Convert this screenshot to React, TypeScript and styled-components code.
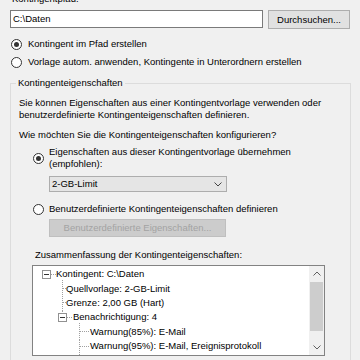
import React from 'react';
import styled, { createGlobalStyle } from 'styled-components';

const GlobalStyle = createGlobalStyle`
  html, body {
    margin: 0;
    padding: 0;
    background: #f0f0f0;
  }
  body {
    font-family: "Liberation Sans", Arial, sans-serif;
    font-size: 9.5px;
    line-height: 12px;
    color: #000;
  }
`;

// --- dialog frame ---
const Dialog = styled.div`
  width: 360px;
  height: 360px;
  overflow: hidden;
  box-sizing: border-box;
  padding-left: 10px;
  background: #f0f0f0;
`;

const PathLabel = styled.div`
  margin-top: -7px;
  padding-left: 2px;
  height: 12px;
`;

const PathRow = styled.div`
  display: flex;
  align-items: flex-start;
  gap: 5px;
  margin-top: 5px;
  height: 19px;
`;

const TextBox = styled.div`
  box-sizing: border-box;
  width: 253px;
  height: 18px;
  border: 1px solid #7a7a7a;
  background: #fff;
  padding: 2px 0 0 2px;
`;

const PushButton = styled.div<{ $width: number; $disabled?: boolean }>`
  box-sizing: border-box;
  display: flex;
  align-items: center;
  justify-content: center;
  width: ${p => p.$width}px;
  height: ${p => (p.$disabled ? 18 : 19)}px;
  background: ${p => (p.$disabled ? '#cccccc' : '#e1e1e1')};
  border: 1px solid ${p => (p.$disabled ? '#bfbfbf' : '#adadad')};
  color: ${p => (p.$disabled ? '#a3a3a3' : '#000')};
`;

// --- radio buttons ---
const RadioRow = styled.div<{ $top: number; $indent: number; $gap: number }>`
  display: flex;
  align-items: center;
  gap: ${p => p.$gap}px;
  margin: ${p => p.$top}px 0 0 ${p => p.$indent}px;
`;

const RadioCircle = styled.span<{ $checked?: boolean }>`
  box-sizing: border-box;
  flex: none;
  width: 11px;
  height: 11px;
  border-radius: 50%;
  border: 1px solid #333;
  background: #fff;
  display: flex;
  align-items: center;
  justify-content: center;

  &::after {
    content: '';
    width: 5px;
    height: 5px;
    border-radius: 50%;
    background: ${p => (p.$checked ? '#333' : 'transparent')};
  }
`;

// --- group box ---
const GroupBox = styled.fieldset`
  box-sizing: border-box;
  width: 341px;
  height: 320px;
  min-width: 0;
  margin: 9px 0 0;
  padding: 0;
  border: 1px solid #dcdcdc;
`;

const GroupCaption = styled.legend`
  margin-left: 5px;
  padding: 0 2px;
  line-height: 12px;
`;

const GroupBody = styled.div`
  padding-left: 8px;
`;

const Text = styled.p<{ $top: number; $indent?: number }>`
  margin: ${p => p.$top}px 0 0 ${p => p.$indent ?? 0}px;
`;

const ComboBox = styled.div`
  box-sizing: border-box;
  width: 178px;
  height: 16px;
  margin: 6px 0 0 30px;
  border: 1px solid #adadad;
  background: #e5e5e5;
  display: flex;
  align-items: center;
  justify-content: space-between;
  padding: 0 4px 0 2px;
`;

const ButtonSlot = styled.div`
  margin: 4px 0 0 30px;
`;

// --- summary tree ---
const TreeBox = styled.div`
  box-sizing: border-box;
  width: 293px;
  height: 91px;
  margin: 4px 0 0 13px;
  border: 1px solid #828282;
  background: #fff;
  display: flex;
  overflow: hidden;
`;

const TreeList = styled.div`
  flex: 1;
  padding-top: 1px;
`;

const TreeRow = styled.div`
  display: flex;
  align-items: center;
  height: 14.4px;
  white-space: nowrap;
`;

const Guide = styled.svg`
  flex: none;
  display: block;
  overflow: visible;
`;

const ScrollBar = styled.div`
  width: 15px;
  display: flex;
  flex-direction: column;
  background: #f0f0f0;
`;

const ScrollArrow = styled.div`
  height: 15px;
  display: flex;
  align-items: center;
  justify-content: center;
`;

const ScrollTrack = styled.div`
  flex: 1;
  padding: 1px 1px 0;
`;

const ScrollThumb = styled.div`
  height: 49px;
  background: #cdcdcd;
`;

const Chevron = ({ up, color = '#606060' }: { up?: boolean; color?: string }) => (
  <svg width="8" height="5" viewBox="0 0 8 5">
    <path
      d={up ? 'M0.5 4.5 L4 1 L7.5 4.5' : 'M0.5 0.5 L4 4 L7.5 0.5'}
      fill="none"
      stroke={color}
      strokeWidth="1"
    />
  </svg>
);

type Line = [number, number, number, number];
type Node = { label: string; width: number; lines: Line[]; box?: number };

const M = 7; // middle of a row
const nodes: Node[] = [
  { label: 'Kontingent: C:\\Daten', width: 23, box: 13, lines: [[17, M, 22, M], [29, M + 5, 29, 15]] },
  { label: 'Quellvorlage: 2-GB-Limit', width: 33, lines: [[29, 0, 29, 15], [29, M, 32, M]] },
  { label: 'Grenze: 2,00 GB (Hart)', width: 33, lines: [[29, 0, 29, 15], [29, M, 32, M]] },
  { label: 'Benachrichtigung: 4', width: 40, box: 29, lines: [[29, 0, 29, M - 4], [33, M, 39, M], [46, M + 5, 46, 15]] },
  { label: 'Warnung(85%): E-Mail', width: 57, lines: [[46, 0, 46, 15], [46, M, 55, M]] },
  { label: 'Warnung(95%): E-Mail, Ereignisprotokoll', width: 57, lines: [[46, 0, 46, 15], [46, M, 55, M]] },
];

const TreeNode = ({ node }: { node: Node }) => (
  <TreeRow>
    <Guide width={node.width} height={15} shapeRendering="crispEdges">
      {node.lines.map(([x1, y1, x2, y2], i) => (
        <line
          key={i}
          x1={x1 + 0.5}
          y1={y1 + 0.5}
          x2={x2 + 0.5}
          y2={y2 + 0.5}
          stroke="#a0a0a0"
          strokeDasharray="1 1"
        />
      ))}
      {node.box !== undefined && (
        <g>
          <rect x={node.box - 4 + 0.5} y={M - 4 + 0.5} width="8" height="8" fill="#fff" stroke="#919191" />
          <line x1={node.box - 2} y1={M + 0.5} x2={node.box + 3} y2={M + 0.5} stroke="#333" />
        </g>
      )}
    </Guide>
    <span>{node.label}</span>
  </TreeRow>
);

export default function App() {
  return (
    <>
      <GlobalStyle />
      <Dialog>
        <PathLabel>Kontingentpfad:</PathLabel>
        <PathRow>
          <TextBox>C:\Daten</TextBox>
          <PushButton $width={82}>Durchsuchen...</PushButton>
        </PathRow>

        <RadioRow $top={9} $indent={1} $gap={6}>
          <RadioCircle $checked />
          <span>Kontingent im Pfad erstellen</span>
        </RadioRow>
        <RadioRow $top={6} $indent={1} $gap={6}>
          <RadioCircle />
          <span>Vorlage autom. anwenden, Kontingente in Unterordnern erstellen</span>
        </RadioRow>

        <GroupBox>
          <GroupCaption>Kontingenteigenschaften</GroupCaption>
          <GroupBody>
            <Text $top={8}>
              Sie können Eigenschaften aus einer Kontingentvorlage verwenden oder
              <br />
              benutzerdefinierte Kontingenteigenschaften definieren.
            </Text>
            <Text $top={8}>Wie möchten Sie die Kontingenteigenschaften konfigurieren?</Text>

            <RadioRow $top={5} $indent={14} $gap={5}>
              <RadioCircle $checked />
              <span>
                Eigenschaften aus dieser Kontingentvorlage übernehmen
                <br />
                (empfohlen):
              </span>
            </RadioRow>
            <ComboBox>
              <span>2-GB-Limit</span>
              <Chevron color="#444" />
            </ComboBox>

            <RadioRow $top={11} $indent={14} $gap={5}>
              <RadioCircle />
              <span>Benutzerdefinierte Kontingenteigenschaften definieren</span>
            </RadioRow>
            <ButtonSlot>
              <PushButton $width={177} $disabled>
                Benutzerdefinierte Eigenschaften...
              </PushButton>
            </ButtonSlot>

            <Text $top={12} $indent={16}>Zusammenfassung der Kontingenteigenschaften:</Text>
            <TreeBox>
              <TreeList>
                {nodes.map(n => (
                  <TreeNode key={n.label} node={n} />
                ))}
              </TreeList>
              <ScrollBar>
                <ScrollArrow>
                  <Chevron up />
                </ScrollArrow>
                <ScrollTrack>
                  <ScrollThumb />
                </ScrollTrack>
                <ScrollArrow>
                  <Chevron />
                </ScrollArrow>
              </ScrollBar>
            </TreeBox>
          </GroupBody>
        </GroupBox>
      </Dialog>
    </>
  );
}
